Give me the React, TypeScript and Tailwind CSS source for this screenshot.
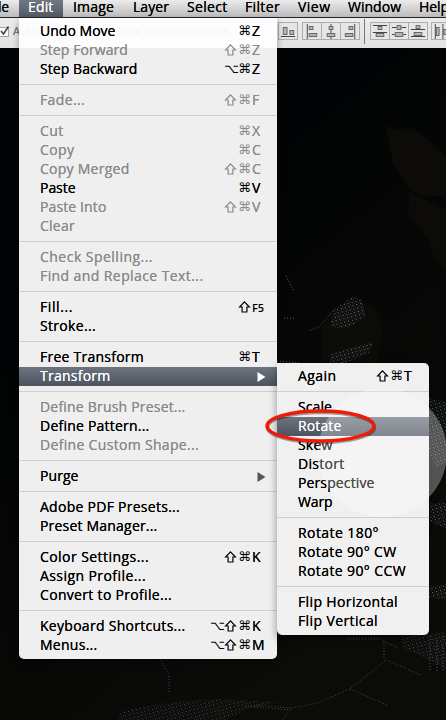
import React, { useLayoutEffect, useRef, useState } from 'react';

type Item = { label: string; w: number; keys?: string; key2?: string; off?: boolean; on?: boolean; sub?: boolean } | null;

const edit: Item[] = [
  { label: 'Undo Move', w: 75.5, keys: '⌘', key2: 'Z' },
  { label: 'Step Forward', w: 88, keys: '⇧⌘', key2: 'Z', off: true },
  { label: 'Step Backward', w: 97.5, keys: '⌥⌘', key2: 'Z' },
  null,
  { label: 'Fade...', w: 45, keys: '⇧⌘', key2: 'F', off: true },
  null,
  { label: 'Cut', w: 23.5, keys: '⌘', key2: 'X', off: true },
  { label: 'Copy', w: 34.5, keys: '⌘', key2: 'C', off: true },
  { label: 'Copy Merged', w: 89.5, keys: '⇧⌘', key2: 'C', off: true },
  { label: 'Paste', w: 35.5, keys: '⌘', key2: 'V' },
  { label: 'Paste Into', w: 66.5, keys: '⇧⌘', key2: 'V', off: true },
  { label: 'Clear', w: 35, off: true },
  null,
  { label: 'Check Spelling...', w: 113, off: true },
  { label: 'Find and Replace Text...', w: 163.5, off: true },
  null,
  { label: 'Fill...', w: 33, keys: '⇧', key2: 'F5' },
  { label: 'Stroke...', w: 56 },
  null,
  { label: 'Free Transform', w: 104, keys: '⌘', key2: 'T' },
  { label: 'Transform', w: 70.5, on: true, sub: true },
  null,
  { label: 'Define Brush Preset...', w: 145.5, off: true },
  { label: 'Define Pattern...', w: 109.5 },
  { label: 'Define Custom Shape...', w: 159, off: true },
  null,
  { label: 'Purge', w: 38.5, sub: true },
  null,
  { label: 'Adobe PDF Presets...', w: 140 },
  { label: 'Preset Manager...', w: 117.5 },
  null,
  { label: 'Color Settings...', w: 109, keys: '⇧⌘', key2: 'K' },
  { label: 'Assign Profile...', w: 106 },
  { label: 'Convert to Profile...', w: 132 },
  null,
  { label: 'Keyboard Shortcuts...', w: 145.5, keys: '⌥⇧⌘', key2: 'K' },
  { label: 'Menus...', w: 57.5, keys: '⌥⇧⌘', key2: 'M' },
];

const transform: Item[] = [
  { label: 'Again', w: 38.5, keys: '⇧⌘', key2: 'T' },
  null,
  { label: 'Scale', w: 34 },
  { label: 'Rotate', w: 43.5, on: true },
  { label: 'Skew', w: 34.5 },
  { label: 'Distort', w: 46.5 },
  { label: 'Perspective', w: 76.5 },
  { label: 'Warp', w: 34.5 },
  null,
  { label: 'Rotate 180°', w: 81 },
  { label: 'Rotate 90° CW', w: 98.5 },
  { label: 'Rotate 90° CCW', w: 108 },
  null,
  { label: 'Flip Horizontal', w: 100 },
  { label: 'Flip Vertical', w: 80 },
];

/* Tracks a label so that it fills the given width. */
function Fit({ text, w }: { text: string; w: number }) {
  const ref = useRef<HTMLSpanElement>(null);
  const [ls, setLs] = useState(0);
  useLayoutEffect(() => {
    if (ref.current) setLs((w - ref.current.getBoundingClientRect().width) / text.length);
  }, []);
  return (
    <span ref={ref} style={{ letterSpacing: ls }} className="[text-shadow:0_0_0.6px_currentColor]">
      {text}
    </span>
  );
}

function Rows({ items }: { items: Item[] }) {
  return (
    <>
      {items.map((it, i) =>
        it === null ? (
          <div key={i} className="h-3 pt-[5px]">
            <div className="h-px bg-[#cecece]" />
          </div>
        ) : (
          <div
            key={i}
            className={`flex h-[19px] items-center pr-[11px] pl-[21px] text-[14px] whitespace-nowrap ${
              it.on ? 'bg-linear-to-b from-[#6d747e] to-[#4c545f] text-white' : it.off ? 'text-[#8a8a8a]' : 'text-black'
            }`}
          >
            <span className="flex-1 pb-0.5 leading-[17px]">
              <Fit text={it.label} w={it.w} />
            </span>
            {it.keys && (
              <span className="flex items-center pb-0.5 leading-[17px]">
                {[...it.keys].map((k) =>
                  k === '⇧' ? (
                    <svg key={k} viewBox="0 0 14 14" className="mt-px size-3.5 fill-none stroke-current" strokeWidth="1.2">
                      <path d="M6.5 1.8L11.4 7H8.9V12H4.1V7H1.6Z" />
                    </svg>
                  ) : (
                    <span key={k} className="w-[14px] font-['DejaVu_Sans'] text-[13px]">
                      {k}
                    </span>
                  ),
                )}
                <span className={it.key2 === 'F5' ? 'w-[14px] pt-0.5 text-[11px] font-semibold' : 'w-[14px] [text-shadow:0_0_0.6px_currentColor]'}>
                  {it.key2}
                </span>
              </span>
            )}
            {it.sub && (
              <svg width="9" height="10" viewBox="0 0 9 10" className={it.on ? 'fill-white' : 'fill-[#555]'}>
                <path d="M0.5 0L8.5 5L0.5 10Z" />
              </svg>
            )}
          </div>
        ),
      )}
    </>
  );
}

type Shape = { boxes: number[][]; lines: number[][] };

/* Boxes are x, y, width, height; lines are x, y, width, height of a thin bar. */
const alignBottom: Shape = { boxes: [[4, 4, 5, 8], [11, 7, 5, 5]], lines: [[2, 13, 15, 1]] };
const alignGroup: Shape[] = [
  { boxes: [[6, 3, 5, 4], [6, 10, 9, 4]], lines: [[4, 1, 1, 15]] },
  { boxes: [[7, 3, 5, 4], [5, 10, 9, 4]], lines: [[9, 1, 1, 2], [9, 7, 1, 3], [9, 14, 1, 2]] },
  { boxes: [[8, 3, 5, 4], [4, 10, 9, 4]], lines: [[14, 1, 1, 15]] },
];
const distributeGroup: Shape[] = [
  { boxes: [[7, 3, 5, 4], [5, 10, 9, 4]], lines: [[2, 2, 15, 1], [2, 9, 15, 1]] },
  { boxes: [[7, 2, 5, 5], [5, 9, 9, 5]], lines: [[2, 4, 5, 1], [12, 4, 5, 1], [2, 11, 3, 1], [14, 11, 3, 1]] },
  { boxes: [[7, 2, 5, 4], [5, 9, 9, 4]], lines: [[2, 6, 15, 1], [2, 13, 15, 1]] },
];
const distributeLeft: Shape = { boxes: [[4, 4, 4, 9], [12, 6, 4, 6]], lines: [[3, 1, 1, 15], [11, 1, 1, 15]] };

function ToolGroup({ shapes }: { shapes: Shape[] }) {
  return (
    <div className="flex h-[18px] shrink-0 divide-x divide-[#adadad] border border-[#adadad] bg-[#e6e6e6]">
      {shapes.map((s, i) => (
        <svg key={i} viewBox="0 0 19 16" className="box-content h-4 w-[18px] shrink-0" preserveAspectRatio="none">
          {s.boxes.map(([x, y, w, h], j) => (
            <rect key={j} x={x + 0.5} y={y + 0.5} width={w - 1} height={h - 1} fill="#b5b5b5" stroke="#666" />
          ))}
          {s.lines.map(([x, y, w, h], j) => (
            <rect key={j} x={x} y={y} width={w} height={h} fill="#444" />
          ))}
        </svg>
      ))}
    </div>
  );
}

function Artwork() {
  return (
    <svg viewBox="0 0 446 720" className="absolute inset-0 h-full w-full">
      <defs>
        <pattern id="dots" width="4" height="3.5" patternUnits="userSpaceOnUse" patternTransform="rotate(-14)">
          <rect width="1.1" height="1.1" fill="#6a7f83" />
          <rect x="2" y="2" width="1" height="1" fill="#37454a" />
        </pattern>
        <linearGradient id="ground" x1="0" y1="0" x2="0.5" y2="1">
          <stop offset="0.4" stopColor="#020304" />
          <stop offset="1" stopColor="#0b0b08" />
        </linearGradient>
      </defs>
      <rect width="446" height="720" fill="url(#ground)" />
      <g fill="#0c0b08">
        <path d="M386 126L396 129L413 128L427 138L446 157V197L420 195L408 188L393 164Z" />
        <path d="M409 191L446 210V272L434 258L427 237L408 215Z" />
        <path d="M321 326L350 298L372 306L382 325L378 362H321Z" />
      </g>
      <g fill="url(#dots)">
        <path d="M330 327L334 309L352 297L362 299L366 316L348 328Z" />
        <path d="M330 354L373 341L370 352L345 363H330Z" />
        <path d="M429 398L446 402V462L436 468L429 450Z" />
        <path d="M430 503L446 503V528L430 522Z" />
        <path d="M429 586L446 584V599L429 598Z" />
        <path d="M400 636L446 632V670L430 660L402 648Z" opacity="0.7" />
        <path d="M117 720L122 711L165 703L213 699L280 702L246 710L225 720Z" opacity="0.6" />
      </g>
      <g fill="none" stroke="#5a676b" strokeWidth="1" strokeDasharray="1 2">
        <path d="M286 276L294 291M284 318H294M310 330L319 327L335 309M277 361L300 363" />
        <path d="M347 639H380L398 648M384 642V658M256 705L292 708L318 703L350 689L386 660L421 675M350 689L387 705M292 708L282 720" opacity="0.7" />
        <path d="M161 660L169 675V694M245 706L290 710" opacity="0.7" />
        <path d="M430 636V670M437 640V672M443 636V670" opacity="0.8" />
      </g>
    </svg>
  );
}

const menus = [
  ['Image', 'w-[60px]', '41'],
  ['Layer', 'w-[54px]', '36'],
  ['Select', 'w-[58px]', '40.5'],
  ['Filter', 'w-[53px]', '35'],
  ['View', 'w-[50px]', '32.5'],
  ['Window', 'w-[71px]', '53'],
  ['Help', 'w-[60px]', '30'],
];

export default function App() {
  return (
    <div className="relative h-[720px] w-[446px] overflow-hidden bg-[#040506] font-['Open_Sans',sans-serif]">
      <Artwork />
      <div className="relative flex h-[17px] bg-linear-to-b from-[#ececec] to-[#bcbcbc] text-[14px] leading-[14px] whitespace-nowrap text-black">
        <div className="flex w-[19px] shrink-0 justify-end pr-[10px]"><Fit text="File" w={21.5} /></div>
        <div className="w-11 shrink-0 bg-linear-to-b from-[#717883] to-[#525a65] pl-[9px] text-white"><Fit text="Edit" w={25.5} /></div>
        {menus.map(([name, cls, w]) => (
          <div key={name} className={`${cls} shrink-0 pl-[10px]`}><Fit text={name} w={Number(w)} /></div>
        ))}
      </div>
      <div className="relative h-px bg-[#20252c]" />
      <div className="relative flex h-[30px] items-center overflow-hidden bg-linear-to-b from-[#ececec] to-[#e2e2e2] pb-1 text-[11px] whitespace-nowrap text-[#777]">
        <div className="flex w-[116px] shrink-0 items-center gap-[3px]">
          <svg viewBox="0 0 10 12" className="h-3 w-[10px] shrink-0 fill-none">
            <rect x="-2.5" y="2.5" width="11" height="9" fill="#fafafa" stroke="#a5a5a5" />
            <path d="M1 6L3.5 9L8.5 1.5" stroke="#444" strokeWidth="1.6" />
          </svg>
          <Fit text="Auto" w={26} />
        </div>
        <div className="w-[162px] shrink-0 text-[10px]"><Fit text="Show Transform Controls" w={112} /></div>
        <ToolGroup shapes={[alignBottom]} />
        <div className="w-1 shrink-0" />
        <ToolGroup shapes={alignGroup} />
        <div className="mr-[5px] ml-1 h-[25px] w-px shrink-0 bg-[#777]" />
        <ToolGroup shapes={distributeGroup} />
        <div className="w-[3px] shrink-0" />
        <ToolGroup shapes={[distributeLeft]} />
      </div>

      <div className="absolute top-[18px] left-[19px] h-[641px] w-[258px] rounded-b-[5px] bg-[#fefefe]/94 pt-1 shadow-[0_3px_7px_rgba(0,0,0,0.35)]">
        <Rows items={edit} />
      </div>
      <div className="absolute top-[363px] left-[277px] h-[272px] w-[152px] rounded-[5px] rounded-tl-none bg-[#f1f0f0] pt-1 shadow-[0_4px_8px_rgba(0,0,0,0.4)]">
        <Rows items={transform} />
      </div>
      <div className="absolute top-[388px] left-[318px] size-[129px] rounded-full bg-white/30" />
      <svg viewBox="0 0 116 40" className="absolute top-[406px] left-[263px] h-10 w-[116px] fill-none">
        <ellipse cx="58" cy="21.5" rx="53.5" ry="15" stroke="#000" strokeOpacity="0.35" strokeWidth="3.5" />
        <ellipse cx="57.5" cy="20" rx="53.5" ry="15" stroke="#f01a0a" strokeWidth="3.4" />
      </svg>
    </div>
  );
}
